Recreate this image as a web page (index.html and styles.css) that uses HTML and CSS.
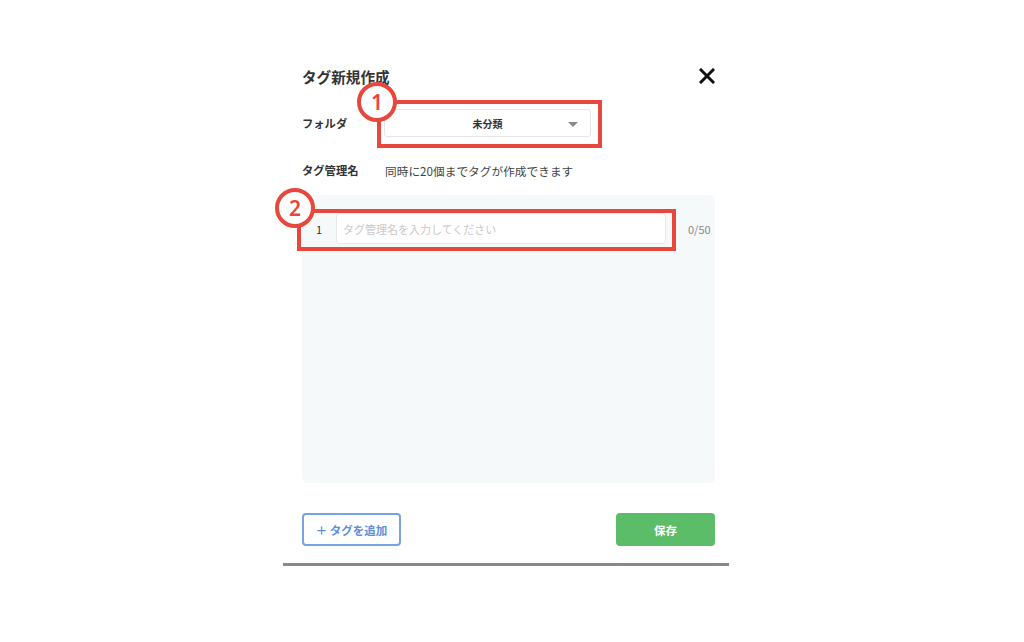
FILE: index.html
```html
<!DOCTYPE html>
<html lang="ja">
<head>
    <meta charset="UTF-8">
    <meta name="viewport" content="width=device-width, initial-scale=1.0">
    <title>タグ新規作成</title>
    <link rel="stylesheet" href="styles.css">
</head>
<body>
    <div class="modal">
        <div class="modal-inner">
            <div class="modal-head">
                <h2 class="modal-title">タグ新規作成</h2>
                <span class="close-btn">
                    <svg width="16" height="16" viewBox="0 0 16 16"><path d="M2 2 L14 14 M14 2 L2 14" stroke="#111" stroke-width="3" stroke-linecap="square"/></svg>
                </span>
            </div>

            <div class="field-row folder-row">
                <span class="field-label">フォルダ</span>
                <div class="select-box">
                    <span class="select-value">未分類</span>
                    <span class="select-caret"></span>
                </div>
            </div>

            <div class="field-row name-row">
                <span class="field-label">タグ管理名</span>
                <span class="field-hint">同時に20個までタグが作成できます</span>
            </div>

            <div class="tag-area">
                <div class="tag-row">
                    <span class="tag-num">1</span>
                    <input class="tag-input" type="text" placeholder="タグ管理名を入力してください">
                    <span class="tag-count">0/50</span>
                </div>
            </div>

            <div class="modal-foot">
                <button class="btn btn-add">＋ タグを追加</button>
                <button class="btn btn-save">保存</button>
            </div>
        </div>

        <!-- annotations -->
        <div class="annot-box box-1"></div>
        <div class="annot-badge badge-1">1</div>
        <div class="annot-box box-2"></div>
        <div class="annot-badge badge-2">2</div>
    </div>
</body>
</html>
```

FILE: styles.css
```css
body {
    margin: 0;
    padding: 0;
    background: #fff;
    color: #333;
    font-family: "Noto Sans CJK JP", "Noto Sans", sans-serif;
}
.modal {
    position: relative;
    width: 446px;
    margin: 64px 0 0 283px;
    border-bottom: 3px solid #8a8a8a;
}
.modal-inner {
    padding: 0 14px 17px 19px;
}
.modal-head {
    display: flex;
    justify-content: space-between;
    align-items: center;
    height: 24px;
}
.modal-title {
    margin: 0;
    font-size: 14.6px;
    font-weight: bold;
    color: #333;
}
.close-btn {
    display: flex;
}
.field-row {
    display: flex;
    align-items: center;
}
.field-label {
    width: 82px;
    font-size: 11.3px;
    font-weight: bold;
    color: #333;
}
.folder-row { margin-top: 21px; }
.select-box {
    width: 207px;
    height: 28px;
    box-sizing: border-box;
    border: 1px solid #e6e6e6;
    border-radius: 3px;
    background: #fff;
    display: flex;
    align-items: center;
    justify-content: center;
    position: relative;
}
.select-value {
    font-size: 10px;
    font-weight: bold;
    color: #333;
}
.select-caret {
    position: absolute;
    right: 12px;
    top: 12px;
    border-left: 5px solid transparent;
    border-right: 5px solid transparent;
    border-top: 5px solid #8a8a8a;
}
.name-row {
    margin-top: 23px;
    height: 20px;
}
.field-hint {
    font-size: 11.7px;
    color: #444;
    margin-left: 1px;
}
.tag-area {
    margin-top: 15px;
    height: 288px;
    box-sizing: border-box;
    padding-top: 18px;
    background: #f6f9fa;
    border-radius: 6px;
}
.tag-row {
    display: flex;
    align-items: center;
}
.tag-num {
    width: 20px;
    padding-right: 14px;
    text-align: right;
    font-size: 11px;
    color: #333;
}
.tag-input {
    width: 330px;
    height: 31px;
    box-sizing: border-box;
    border: 1px solid #e8e8e8;
    border-radius: 3px;
    background: #fff;
    padding: 0 6px;
    font-family: inherit;
    font-size: 11px;
    outline: none;
}
.tag-input::placeholder { color: #c9c9c9; }
.tag-count {
    margin-left: 22px;
    font-size: 11px;
    color: #888;
}
.modal-foot {
    margin-top: 30px;
    display: flex;
    justify-content: space-between;
}
.btn {
    width: 99px;
    height: 33px;
    border-radius: 4px;
    font-family: inherit;
    font-size: 11.5px;
    font-weight: bold;
    cursor: pointer;
}
.btn-add {
    background: #fff;
    border: 2px solid #76a3e2;
    color: #5e90d8;
}
.btn-save {
    background: #5cbd69;
    border: none;
    color: #fff;
}
.annot-box {
    position: absolute;
    box-sizing: border-box;
    border: 4px solid #e8473c;
}
.box-1 { left: 94px; top: 36px; width: 225px; height: 48px; }
.box-2 { left: 14px; top: 145px; width: 379px; height: 42px; }
.annot-badge {
    position: absolute;
    width: 40px;
    height: 40px;
    box-sizing: border-box;
    border: 4px solid #e8473c;
    border-radius: 50%;
    background: #fff;
    color: #e8473c;
    font-family: "Noto Sans", sans-serif;
    font-size: 21px;
    font-weight: 600;
    display: flex;
    align-items: center;
    justify-content: center;
}
.badge-1 { left: 74px; top: 18px; }
.badge-2 { left: -8px; top: 124px; }
```
